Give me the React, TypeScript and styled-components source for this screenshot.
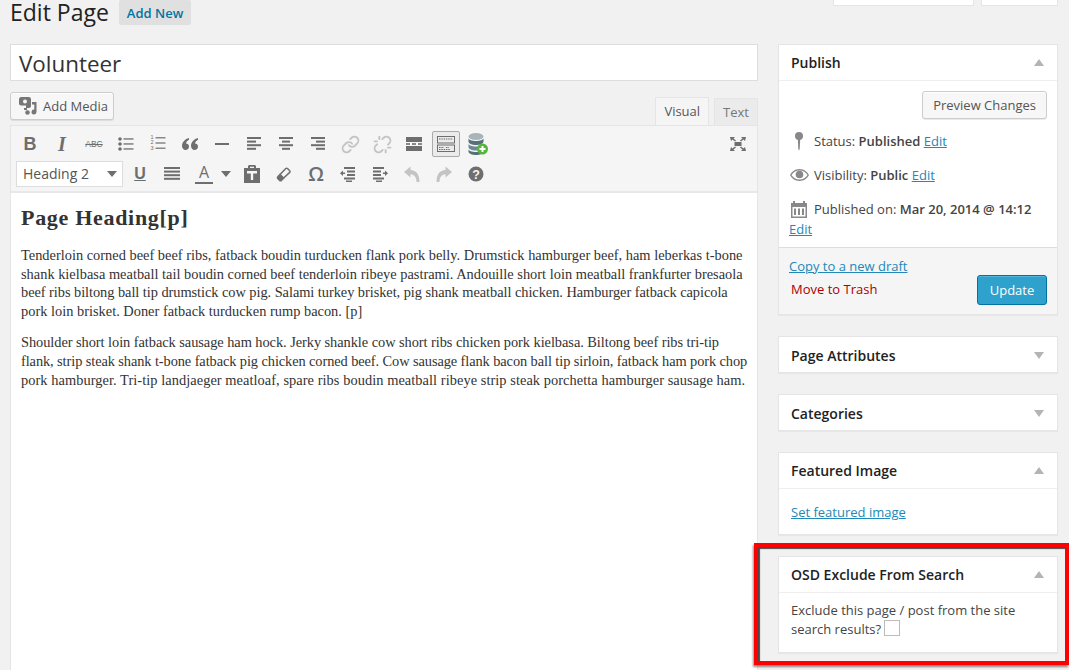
import styled, { createGlobalStyle } from 'styled-components';
import { Link, Unlink } from 'lucide-react';
import type { ReactNode } from 'react';

const GlobalStyle = createGlobalStyle`
    html, body {
        margin: 0;
        padding: 0;
        background: #f1f1f1;
    }
    body {
        font-family: "Open Sans", "Liberation Sans", sans-serif;
        font-size: 13px;
        color: #444;
    }
`;

const Page = styled.div`
    position: relative;
    width: 1069px;
    height: 670px;
    overflow: hidden;
    background: #f1f1f1;
`;

const ScreenTabs = styled.div`
    display: flex;
    justify-content: flex-end;
    gap: 7px;
    height: 7px;
    padding-right: 11px;
`;

const ScreenTab = styled.div<{ $width: number }>`
    width: ${(p) => p.$width}px;
    height: 6px;
    box-sizing: border-box;
    background: #fff;
    border: 1px solid #e5e5e5;
    border-top: none;
`;

const TitleRow = styled.div`
    display: flex;
    align-items: center;
    gap: 10px;
    height: 25px;
    margin-top: -7px;
    padding: 0 10px;
`;

const PageTitle = styled.h1`
    margin: 0;
    font-size: 23px;
    font-weight: 400;
    line-height: 25px;
    color: #222;
`;

const AddNew = styled.a`
    display: block;
    padding: 0 8px;
    height: 25px;
    line-height: 26px;
    font-size: 13px;
    font-weight: 600;
    color: #0074a2;
    background: #e0e0e0;
    border-radius: 2px;
`;

const Columns = styled.div`
    display: grid;
    grid-template-columns: 748px 280px;
    gap: 20px;
    padding: 19px 11px 0 10px;
`;

const Main = styled.div`
    display: flex;
    flex-direction: column;
    height: 640px;
`;

const TitleInput = styled.div`
    box-sizing: border-box;
    height: 37px;
    padding: 0 8px;
    line-height: 37px;
    font-size: 22.4px;
    color: #333;
    background: #fff;
    border: 1px solid #ddd;
`;

const MediaRow = styled.div`
    display: flex;
    justify-content: space-between;
    align-items: flex-end;
    height: 44px;
`;

const Button = styled.div`
    display: flex;
    align-items: center;
    box-sizing: border-box;
    height: 28px;
    padding: 0 10px;
    font-size: 13px;
    color: #555;
    background: #f7f7f7;
    border: 1px solid #ccc;
    border-radius: 3px;
    box-shadow: inset 0 1px 0 #fff, 0 1px 0 rgba(0, 0, 0, 0.08);
`;

const MediaButton = styled(Button)`
    width: 104px;
    margin-bottom: 5px;
    padding: 0 0 0 7px;
    gap: 5px;
`;

const Tabs = styled.div`
    display: flex;
    gap: 5px;
    align-items: flex-end;
`;

const Tab = styled.div<{ $active?: boolean }>`
    box-sizing: border-box;
    height: ${(p) => (p.$active ? 28 : 27)}px;
    padding: 0 8px;
    line-height: 27px;
    font-size: 13px;
    color: ${(p) => (p.$active ? '#555' : '#777')};
    background: ${(p) => (p.$active ? '#f5f5f5' : '#ebebeb')};
    border: 1px solid #e5e5e5;
    border-bottom: none;
`;

const Toolbar = styled.div`
    box-sizing: border-box;
    height: 68px;
    padding-top: 3px;
    background: #f5f5f5;
    border: 1px solid #e5e5e5;
    border-bottom: 2px solid #e8e8e8;
`;

const ToolRow = styled.div`
    display: flex;
    align-items: center;
    height: 30px;
    padding: 0 3px;
`;

const Tool = styled.div<{ $active?: boolean; $width?: number }>`
    flex: none;
    display: flex;
    align-items: center;
    justify-content: center;
    box-sizing: border-box;
    width: ${(p) => p.$width ?? 32}px;
    height: 26px;
    color: #6e6e6e;
    ${(p) =>
        p.$active &&
        `
        width: 28px;
        margin: 0 2px;
        background: #ebebeb;
        border: 1px solid #aaa;
        border-radius: 2px;
    `}
`;

const ToolSpacer = styled.div`
    flex: 1;
`;

const LetterIcon = styled.span<{ $italic?: boolean; $underline?: boolean; $size?: number; $serif?: boolean }>`
    font-family: ${(p) => (p.$serif ? '"Liberation Serif", serif' : '"Liberation Sans", sans-serif')};
    font-size: ${(p) => p.$size ?? 18}px;
    font-weight: 700;
    font-style: ${(p) => (p.$italic ? 'italic' : 'normal')};
    text-decoration: ${(p) => (p.$underline ? 'underline' : 'none')};
    line-height: 20px;
    color: #6e6e6e;
`;

const OmegaIcon = styled.span`
    font-family: "Open Sans", sans-serif;
    font-size: 20px;
    font-weight: 600;
    line-height: 20px;
    color: #6e6e6e;
`;

const StrikeIcon = styled.span`
    font-family: "Liberation Sans", sans-serif;
    font-size: 8.5px;
    font-weight: 400;
    line-height: 20px;
    color: #6e6e6e;
    text-decoration: line-through;
`;

const ColorIcon = styled.span`
    display: block;
    box-sizing: border-box;
    width: 18px;
    height: 20px;
    font-size: 16px;
    line-height: 17px;
    text-align: center;
    color: #6e6e6e;
    border-bottom: 2px solid #6e6e6e;
`;

const Caret = styled.span`
    width: 0;
    height: 0;
    border-left: 5px solid transparent;
    border-right: 5px solid transparent;
    border-top: 6px solid #6e6e6e;
`;

const CaretTool = styled(Tool)`
    width: 16px;
    padding-right: 4px;
`;

const FormatSelect = styled.div`
    flex: none;
    display: flex;
    align-items: center;
    justify-content: space-between;
    box-sizing: border-box;
    width: 107px;
    height: 26px;
    margin: 0 1px 0 2px;
    padding: 0 5px 1px 6px;
    font-size: 14px;
    color: #555;
    background: #fff;
    border: 1px solid #ddd;
`;

const Editor = styled.div`
    flex: 1;
    padding: 12px 10px;
    background: #fff;
    border: 1px solid #e5e5e5;
    border-top: none;
    font-family: "Liberation Serif", serif;
    color: #333;
`;

const EditorHeading = styled.h2`
    margin: 0 0 16px;
    font-size: 22px;
    line-height: 25px;
    letter-spacing: 0.7px;
    font-weight: 700;
`;

const EditorText = styled.p`
    margin: 0 0 13px;
    font-size: 14.4px;
    line-height: 18.6px;
    white-space: nowrap;
`;

// Georgia and Liberation Serif differ a little from line to line, so each line gets its own tracking
const EditorLine = styled.span<{ $track?: number }>`
    display: block;
    letter-spacing: ${(p) => p.$track ?? 0}px;
`;

const Side = styled.div`
    display: flex;
    flex-direction: column;
    gap: 21px;
`;

const Box = styled.section`
    background: #fff;
    border: 1px solid #e5e5e5;
    box-shadow: 0 1px 1px rgba(0, 0, 0, 0.04);
`;

const BoxHeader = styled.div<{ $closed?: boolean }>`
    display: flex;
    align-items: center;
    justify-content: space-between;
    box-sizing: border-box;
    height: ${(p) => (p.$closed ? 35 : 36)}px;
    padding: ${(p) => (p.$closed ? '2px 12px 0' : '0 12px')};
    border-bottom: ${(p) => (p.$closed ? 'none' : '1px solid #eee')};
    font-size: 14px;
    font-weight: 600;
    color: #222;
`;

const Toggle = styled.span<{ $down?: boolean }>`
    margin-right: 1px;
    border-left: 5px solid transparent;
    border-right: 5px solid transparent;
    ${(p) => (p.$down ? 'border-top: 7px solid #b4b4b4;' : 'border-bottom: 7px solid #b4b4b4;')}
`;

const PublishBody = styled.div`
    padding: 10px 10px 8px;
`;

const PreviewRow = styled.div`
    display: flex;
    justify-content: flex-end;
    margin-bottom: 5px;
`;

const MetaRow = styled.div`
    display: flex;
    align-items: center;
    gap: 5px;
    height: 34px;
`;

const MetaIcon = styled.span`
    flex: none;
    display: flex;
    justify-content: center;
    width: 20px;
`;

const DateEdit = styled.div`
    height: 20px;
    line-height: 20px;
    margin-top: -7px;
`;

const Strong = styled.b`
    font-weight: 600;
`;

const TextLink = styled.a`
    color: #2188b8;
    text-decoration: underline;
`;

const PublishFooter = styled.div`
    display: flex;
    justify-content: space-between;
    align-items: flex-end;
    box-sizing: border-box;
    height: 67px;
    padding: 10px 10px 9px;
    background: #f5f5f5;
    border-top: 1px solid #ddd;
`;

const FooterLinks = styled.div`
    display: flex;
    flex-direction: column;
    gap: 4px;
    line-height: 19px;
    margin-bottom: 6px;
`;

const Trash = styled.a`
    color: #a00;
    margin-left: 2px;
`;

const UpdateButton = styled.div`
    display: flex;
    align-items: center;
    justify-content: center;
    box-sizing: border-box;
    width: 70px;
    height: 30px;
    font-size: 13px;
    color: #fff;
    background: #2ea2cc;
    border: 1px solid #0074a2;
    border-radius: 3px;
    box-shadow: inset 0 1px 0 rgba(120, 200, 230, 0.5);
`;

const BoxBody = styled.div<{ $top: number; $bottom: number }>`
    padding: ${(p) => p.$top}px 12px ${(p) => p.$bottom}px;
    line-height: 19px;
`;

const Checkbox = styled.span`
    display: inline-block;
    box-sizing: border-box;
    width: 16px;
    height: 16px;
    margin-left: 3px;
    vertical-align: -2px;
    background: #fff;
    border: 1px solid #bbb;
`;

const Highlight = styled.div`
    position: absolute;
    left: 754px;
    top: 543px;
    width: 315px;
    height: 122px;
    box-sizing: border-box;
    border: 4px solid #f00;
    box-shadow: inset 2px 2px 1px rgba(0, 0, 0, 0.7), -1px 2px 2px rgba(0, 0, 0, 0.45);
`;

const Svg = ({ w = 20, h = 20, vb = '0 0 20 20', children }: { w?: number; h?: number; vb?: string; children: ReactNode }) => (
    <svg width={w} height={h} viewBox={vb} fill="currentColor">
        {children}
    </svg>
);

const Bars = ({ rows }: { rows: [number, number][] }) => (
    <Svg>
        {rows.map(([x, w], i) => (
            <rect key={i} x={x} y={3 + i * 3.6} width={w} height={2} />
        ))}
    </Svg>
);

const BulletIcon = () => (
    <Svg>
        {[4, 9, 14].map((y) => (
            <g key={y}>
                <circle cx={4} cy={y + 1} r={1.8} />
                <rect x={7.5} y={y + 0.3} width={10} height={1.3} />
            </g>
        ))}
    </Svg>
);

const NumberIcon = () => (
    <Svg>
        {[1, 2, 3].map((n) => (
            <g key={n}>
                <text x={2.5} y={n * 5.2} fontSize={5.5} fontFamily="Liberation Sans">
                    {n}
                </text>
                <rect x={7.5} y={n * 5.2 - 2} width={10} height={1.2} />
            </g>
        ))}
    </Svg>
);

const QuoteIcon = () => (
    <Svg>
        <path d="M9 4C5 5 2 8 2 12c0 2.200 1.500 4 3.500 4S9 14.500 9 12.500 7.500 9.500 6 9.500c.3-1.700 1.500-3 3-3.700zM18 4c-4 1-7 4-7 8 0 2.200 1.500 4 3.500 4s3.500-1.500 3.500-3.500-1.500-3-3-3c.3-1.700 1.500-3 3-3.700z" />
    </Svg>
);

const MoreIcon = () => (
    <Svg>
        <rect x={2} y={3} width={16} height={5} />
        <rect x={2} y={9.200} width={4} height={1.600} />
        <rect x={8} y={9.200} width={4} height={1.600} />
        <rect x={14} y={9.200} width={4} height={1.600} />
        <rect x={2} y={12} width={16} height={5} />
    </Svg>
);

const KitchenIcon = () => (
    <svg width={20} height={20} viewBox="0 0 20 20" fill="none" stroke="#6e6e6e">
        <rect x={1.500} y={2.500} width={17} height={6.500} strokeWidth={1} />
        <rect x={1.500} y={11} width={17} height={6.500} strokeWidth={1} />
        <path d="M3 5h14M3 13.500h5M10 13.500h3M3 15.500h11" strokeWidth={1.200} strokeDasharray="1.500 .8" />
    </svg>
);

const DatabaseIcon = () => (
    <svg width={22} height={24} viewBox="0 0 22 24">
        <ellipse cx={9} cy={4.500} rx={7.500} ry={3.500} fill="#a9b4b8" />
        <path d="M1.500 6v3.500C1.500 11.500 5 13 9 13s7.500-1.500 7.500-3.500V6C16.500 8 13 9 9 9S1.500 8 1.500 6z" fill="#54707c" />
        <path d="M1.500 11.500V15c0 2 3.500 3.500 7.500 3.500s7.500-1.500 7.500-3.500v-3.500C16.500 13.500 13 14.500 9 14.500s-7.500-1-7.500-3z" fill="#6d8794" />
        <path d="M1.500 17v2.500C1.500 21.500 5 23 9 23s7.500-1.500 7.500-3.500V17c0 2-3.500 3-7.500 3s-7.500-1-7.500-3z" fill="#54707c" />
        <circle cx={15.500} cy={17} r={5.500} fill="#53b63a" />
        <path d="M12.500 17h6M15.500 14v6" stroke="#fff" strokeWidth={2} />
    </svg>
);

const FullscreenIcon = () => (
    <Svg>
        <rect x={6.500} y={8} width={7} height={4} />
        <path d="M2 3h5L5.500 4.500l2.500 2L7 7.500 4.500 5.500 3 7zM18 3h-5l1.500 1.500-2.500 2 1 1 2.500-2L17 7zM2 17h5l-1.500-1.500 2.500-2-1-1-2.500 2L3 13zM18 17h-5l1.500-1.500-2.500-2 1-1 2.500 2L17 13z" />
    </Svg>
);

const PasteIcon = () => (
    <Svg>
        <path d="M2 4h4V2.500C6 1.700 6.700 1 7.500 1h5c.8 0 1.500.7 1.500 1.500V4h4v15H2zM8 2.800V4h4V2.800zM5 7v2.500h3.800V16h2.400V9.500H15V7z" fillRule="evenodd" />
    </Svg>
);

const EraserIcon = () => (
    <svg width={20} height={20} viewBox="0 0 20 20" fill="none" stroke="#6e6e6e" strokeWidth={1.500}>
        <path d="M6 10.500 3.800 12.800a1.200 1.200 0 0 0 0 1.700l1.900 1.900a1.200 1.200 0 0 0 1.700 0L9.700 14z" fill="#6e6e6e" />
        <path d="M6 10.500 11.800 4.500a1.200 1.200 0 0 1 1.700 0l2.200 2.200a1.200 1.200 0 0 1 0 1.700L9.700 14" />
    </svg>
);

const OutdentIcon = () => (
    <Svg>
        <rect x={6} y={3} width={11} height={2} />
        <rect x={9} y={6.500} width={8} height={2} />
        <rect x={9} y={10} width={8} height={2} />
        <rect x={6} y={13.500} width={11} height={2} />
        <rect x={8} y={16.500} width={6} height={1.500} />
        <path d="M2 9.200l3-2.700v2h2v1.500H5v2z" />
    </Svg>
);

const IndentIcon = () => (
    <Svg>
        <rect x={3} y={3} width={11} height={2} />
        <rect x={3} y={6.500} width={8} height={2} />
        <rect x={3} y={10} width={8} height={2} />
        <rect x={3} y={13.500} width={11} height={2} />
        <rect x={6} y={16.500} width={6} height={1.500} />
        <path d="M18 9.200l-3-2.700v2h-2v1.500h2v2z" />
    </Svg>
);

const UndoIcon = () => (
    <svg width={20} height={20} viewBox="0 0 20 20" fill="#c4c4c4">
        <path d="M2 8l6.500-5.500V6C14 6.300 17.500 10 17.500 18h-3c0-5-2.500-7.500-6-7.700V13.500z" />
    </svg>
);

const RedoIcon = () => (
    <svg width={20} height={20} viewBox="0 0 20 20" fill="#c4c4c4">
        <path d="M18 8l-6.500-5.500V6C6 6.300 2.500 10 2.500 18h3c0-5 2.500-7.500 6-7.700V13.500z" />
    </svg>
);

const HelpIcon = () => (
    <svg width={20} height={20} viewBox="0 0 20 20">
        <circle cx={10} cy={10} r={7.500} fill="#6e6e6e" />
        <text x={10} y={14.500} textAnchor="middle" fontSize={12.500} fontWeight={700} fontFamily="Liberation Sans" fill="#f5f5f5">
            ?
        </text>
    </svg>
);

const MediaIcon = () => (
    <svg width={20} height={20} viewBox="0 0 20 20" fill="#777">
        <path fillRule="evenodd" d="M3 1h8c1 0 2 1 2 2v7c0 1-1 2-2 2H9v2H6v-2h2V9.500H3c-1 0-2-1-2-2V3c0-1 1-2 2-2zM7 3.500a2 2 0 1 0 0 4 2 2 0 0 0 0-4z" />
        <path d="M14 6h4.500v10a2.500 2.500 0 1 1-2.200-2.500V8.500H14z" />
        <circle cx={9.500} cy={16.500} r={2.300} />
    </svg>
);

const PinIcon = () => (
    <svg width={14} height={20} viewBox="0 0 14 20" fill="#888">
        <circle cx={7} cy={5} r={4} />
        <path d="M5.800 8h2.400l-.5 10-.7 1.500-.7-1.500z" />
    </svg>
);

const EyeIcon = () => (
    <svg width={19} height={14} viewBox="0 0 19 14" fill="#888">
        <path fillRule="evenodd" d="M9.500 1C14 1 17.500 4 19 7c-1.500 3-5 6-9.500 6S1.500 10 0 7c1.500-3 5-6 9.500-6zM9.500 2.500C6 2.500 3 4.500 1.500 7 3 9.500 6 11.500 9.500 11.500S16 9.500 17.500 7C16 4.500 13 2.500 9.500 2.500z" />
        <circle cx={9.500} cy={6.500} r={3.800} />
    </svg>
);

const CalendarIcon = () => (
    <svg width={18} height={18} viewBox="0 0 18 18" fill="#888">
        <path fillRule="evenodd" d="M1 3h2V1h2v2h8V1h2v2h2v15H1zM2.500 7v9.500h13V7z" />
        <rect x={4} y={8.500} width={2} height={6.500} />
        <rect x={8} y={8.500} width={2} height={6.500} />
        <rect x={12} y={8.500} width={2} height={6.500} />
    </svg>
);

const App = () => {
    return (
        <Page>
            <GlobalStyle />
            <ScreenTabs>
                <ScreenTab $width={141} />
                <ScreenTab $width={77} />
            </ScreenTabs>
            <TitleRow>
                <PageTitle>Edit Page</PageTitle>
                <AddNew>Add New</AddNew>
            </TitleRow>
            <Columns>
                <Main>
                    <TitleInput>Volunteer</TitleInput>
                    <MediaRow>
                        <MediaButton>
                            <MediaIcon />
                            Add Media
                        </MediaButton>
                        <Tabs>
                            <Tab $active>Visual</Tab>
                            <Tab>Text</Tab>
                        </Tabs>
                    </MediaRow>
                    <Toolbar>
                        <ToolRow>
                            <Tool><LetterIcon>B</LetterIcon></Tool>
                            <Tool><LetterIcon $italic $serif $size={20}>I</LetterIcon></Tool>
                            <Tool><StrikeIcon>ABC</StrikeIcon></Tool>
                            <Tool><BulletIcon /></Tool>
                            <Tool><NumberIcon /></Tool>
                            <Tool><QuoteIcon /></Tool>
                            <Tool><Svg><rect x={3} y={9} width={14} height={2} /></Svg></Tool>
                            <Tool><Bars rows={[[3, 14], [3, 9], [3, 14], [3, 9]]} /></Tool>
                            <Tool><Bars rows={[[3, 14], [6, 8], [3, 14], [6, 8]]} /></Tool>
                            <Tool><Bars rows={[[3, 14], [8, 9], [3, 14], [8, 9]]} /></Tool>
                            <Tool><Link size={19} color="#c4c4c4" strokeWidth={2.4} /></Tool>
                            <Tool><Unlink size={19} color="#c4c4c4" strokeWidth={2.4} /></Tool>
                            <Tool><MoreIcon /></Tool>
                            <Tool $active><KitchenIcon /></Tool>
                            <Tool><DatabaseIcon /></Tool>
                            <ToolSpacer />
                            <Tool><FullscreenIcon /></Tool>
                        </ToolRow>
                        <ToolRow>
                            <FormatSelect>
                                Heading 2
                                <Caret />
                            </FormatSelect>
                            <Tool><LetterIcon $underline $size={16}>U</LetterIcon></Tool>
                            <Tool><Bars rows={[[2, 16], [2, 16], [2, 16], [2, 16]]} /></Tool>
                            <Tool><ColorIcon>A</ColorIcon></Tool>
                            <CaretTool><Caret /></CaretTool>
                            <Tool><PasteIcon /></Tool>
                            <Tool><EraserIcon /></Tool>
                            <Tool><OmegaIcon>Ω</OmegaIcon></Tool>
                            <Tool><OutdentIcon /></Tool>
                            <Tool><IndentIcon /></Tool>
                            <Tool><UndoIcon /></Tool>
                            <Tool><RedoIcon /></Tool>
                            <Tool><HelpIcon /></Tool>
                        </ToolRow>
                    </Toolbar>
                    <Editor>
                        <EditorHeading>Page Heading[p]</EditorHeading>
                        <EditorText>
                            <EditorLine>Tenderloin corned beef beef ribs, fatback boudin turducken flank pork belly. Drumstick hamburger beef, ham leberkas t-bone</EditorLine>
                            <EditorLine>shank kielbasa meatball tail boudin corned beef tenderloin ribeye pastrami. Andouille short loin meatball frankfurter bresaola</EditorLine>
                            <EditorLine $track={-0.055}>beef ribs biltong ball tip drumstick cow pig. Salami turkey brisket, pig shank meatball chicken. Hamburger fatback capicola</EditorLine>
                            <EditorLine>pork loin brisket. Doner fatback turducken rump bacon. [p]</EditorLine>
                        </EditorText>
                        <EditorText>
                            <EditorLine $track={-0.057}>Shoulder short loin fatback sausage ham hock. Jerky shankle cow short ribs chicken pork kielbasa. Biltong beef ribs tri-tip</EditorLine>
                            <EditorLine $track={-0.093}>flank, strip steak shank t-bone fatback pig chicken corned beef. Cow sausage flank bacon ball tip sirloin, fatback ham pork chop</EditorLine>
                            <EditorLine $track={0.056}>pork hamburger. Tri-tip landjaeger meatloaf, spare ribs boudin meatball ribeye strip steak porchetta hamburger sausage ham.</EditorLine>
                        </EditorText>
                    </Editor>
                </Main>
                <Side>
                    <Box>
                        <BoxHeader>
                            Publish
                            <Toggle />
                        </BoxHeader>
                        <PublishBody>
                            <PreviewRow>
                                <Button>Preview Changes</Button>
                            </PreviewRow>
                            <MetaRow>
                                <MetaIcon><PinIcon /></MetaIcon>
                                <span>Status: <Strong>Published</Strong> <TextLink>Edit</TextLink></span>
                            </MetaRow>
                            <MetaRow>
                                <MetaIcon><EyeIcon /></MetaIcon>
                                <span>Visibility: <Strong>Public</Strong> <TextLink>Edit</TextLink></span>
                            </MetaRow>
                            <MetaRow>
                                <MetaIcon><CalendarIcon /></MetaIcon>
                                <span>Published on: <Strong>Mar 20, 2014 @ 14:12</Strong></span>
                            </MetaRow>
                            <DateEdit><TextLink>Edit</TextLink></DateEdit>
                        </PublishBody>
                        <PublishFooter>
                            <FooterLinks>
                                <TextLink>Copy to a new draft</TextLink>
                                <Trash>Move to Trash</Trash>
                            </FooterLinks>
                            <UpdateButton>Update</UpdateButton>
                        </PublishFooter>
                    </Box>
                    <Box>
                        <BoxHeader $closed>
                            Page Attributes
                            <Toggle $down />
                        </BoxHeader>
                    </Box>
                    <Box>
                        <BoxHeader $closed>
                            Categories
                            <Toggle $down />
                        </BoxHeader>
                    </Box>
                    <Box>
                        <BoxHeader>
                            Featured Image
                            <Toggle />
                        </BoxHeader>
                        <BoxBody $top={14} $bottom={12}>
                            <TextLink>Set featured image</TextLink>
                        </BoxBody>
                    </Box>
                    <Box>
                        <BoxHeader>
                            OSD Exclude From Search
                            <Toggle />
                        </BoxHeader>
                        <BoxBody $top={8} $bottom={13}>
                            Exclude this page / post from the site search results?
                            <Checkbox />
                        </BoxBody>
                    </Box>
                </Side>
            </Columns>
            <Highlight />
        </Page>
    );
};

export default App;
